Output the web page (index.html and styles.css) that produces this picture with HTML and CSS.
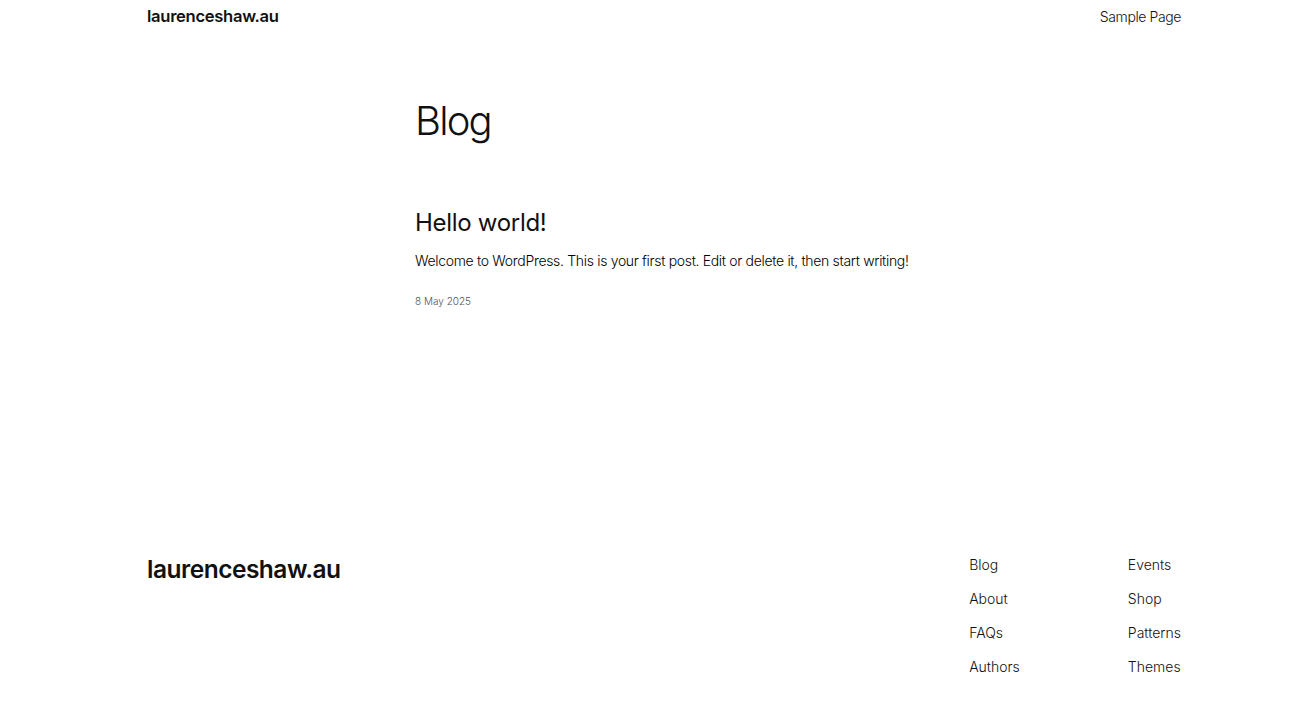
FILE: index.html
```html
<!DOCTYPE html>
<html lang="en">
<head>
  <meta charset="UTF-8" />
  <meta name="viewport" content="width=device-width, initial-scale=1.0" />
  <title>Blog – laurenceshaw.au</title>
  <link rel="stylesheet" href="styles.css">
</head>
<body>
  <header class="site-header">
    <a class="site-title" href="#">laurenceshaw.au</a>
    <nav class="header-nav">
      <a href="#">Sample Page</a>
    </nav>
  </header>

  <main class="content">
    <h1 class="page-title">Blog</h1>
    <article class="post">
      <h2 class="post-title"><a href="#">Hello world!</a></h2>
      <p class="post-excerpt">Welcome to WordPress. This is your first post. Edit or delete it, then start writing!</p>
      <time class="post-date">8 May 2025</time>
    </article>
  </main>

  <footer class="site-footer">
    <a class="footer-title" href="#">laurenceshaw.au</a>
    <div class="footer-nav">
      <ul class="footer-col">
        <li><a href="#">Blog</a></li>
        <li><a href="#">About</a></li>
        <li><a href="#">FAQs</a></li>
        <li><a href="#">Authors</a></li>
      </ul>
      <ul class="footer-col">
        <li><a href="#">Events</a></li>
        <li><a href="#">Shop</a></li>
        <li><a href="#">Patterns</a></li>
        <li><a href="#">Themes</a></li>
      </ul>
    </div>
  </footer>
</body>
</html>
```

FILE: styles.css
```css
* {
  margin: 0;
  padding: 0;
  box-sizing: border-box;
}
body {
  font-family: Inter, "Noto Sans", sans-serif;
  background: #fff;
  color: #111;
  width: 1296px;
  height: 714px;
  overflow: hidden;
}
a {
  color: inherit;
  text-decoration: none;
}
ul {
  list-style: none;
}

/* header */
.site-header {
  display: flex;
  justify-content: space-between;
  align-items: center;
  width: 1034px;
  margin-left: 147px;
  height: 34px;
  padding-bottom: 2px;
}
.site-title {
  font-size: 16.6px;
  font-weight: 600;
  letter-spacing: -0.3px;
}
.header-nav a {
  font-size: 14px;
  font-weight: 300;
  letter-spacing: -0.4px;
}

/* main */
.content {
  margin-left: 415px;
  width: 560px;
  height: 447px;
}
.page-title {
  font-size: 40px;
  font-weight: 300;
  letter-spacing: -1.8px;
  line-height: 1;
  margin-top: 67px;
}
.post {
  margin-top: 68px;
}
.post-title {
  font-size: 24px;
  font-weight: 400;
  letter-spacing: -0.3px;
  line-height: 1.2;
}
.post-excerpt {
  font-size: 14px;
  font-weight: 300;
  letter-spacing: -0.32px;
  line-height: 1.5;
  margin-top: 12px;
  color: #000;
}
.post-date {
  display: block;
  font-size: 10px;
  font-weight: 300;
  line-height: 1.5;
  color: #555;
  margin-top: 23px;
}

/* footer */
.site-footer {
  display: flex;
  justify-content: space-between;
  align-items: flex-start;
  width: 1034px;
  margin-left: 147px;
}
.footer-title {
  font-size: 24.5px;
  font-weight: 600;
  letter-spacing: -0.5px;
  margin-top: 6px;
}
.footer-nav {
  display: flex;
  gap: 108px;
}
.footer-col li {
  font-size: 14px;
  font-weight: 300;
  line-height: 34px;
}
```
